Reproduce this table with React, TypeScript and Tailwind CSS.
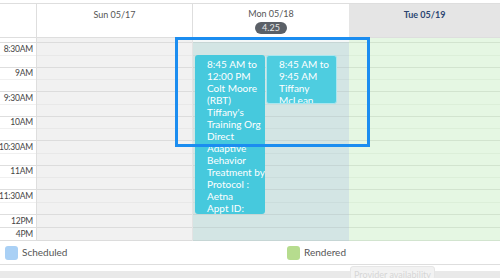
import React from "react"

interface Row {
    label: string;
    h: number;
    split: boolean;
}

const rows: Row[] = [
    { label: "", h: 5, split: false },
    { label: "8:30AM", h: 25, split: true },
    { label: "9AM", h: 24, split: true },
    { label: "9:30AM", h: 25, split: true },
    { label: "10AM", h: 24, split: true },
    { label: "10:30AM", h: 25, split: true },
    { label: "11AM", h: 24, split: true },
    { label: "11:30AM", h: 25, split: true },
    { label: "12PM", h: 13, split: false },
    { label: "4PM", h: 13, split: false },
]

const event1 = ["8:45 AM to", "12:00 PM", "Colt Moore", "(RBT)", "Tiffany's", "Training Org", "Direct", "Adaptive", "Behavior", "Treatment by", "Protocol :", "Aetna", "Appt ID:"]
const event2 = ["8:45 AM to", "9:45 AM", "Tiffany", "McLean"]

const DayCell = ({ row, bg, line, sub }: { row: Row; bg: string; line: string; sub: string }) => (
    <div className={`flex flex-col border-b ${bg} ${line}`} style={{ height: row.h }}>
        {row.split && <div className={`flex-1 border-b ${sub}`} />}
        {row.split && <div className="flex-1" />}
    </div>
)

export default function App() {
    return (
        <div className="w-[500px] h-[278px] overflow-hidden bg-white text-[9px] text-[#444]" style={{ fontFamily: 'Lato, "Liberation Sans", sans-serif' }}>
            <div className="h-[3px] bg-white" />
            {/* header */}
            <div className="grid grid-cols-[37px_156px_156px_151px] h-[35px] border-t border-b border-[#dedede]">
                <div className="border-r border-[#dedede] bg-white" />
                <div className="border-r border-[#dedede] bg-white flex justify-center pt-[4px] text-[#555]">Sun 05/17</div>
                <div className="bg-white flex flex-col items-center pt-[3px] text-[#555]">
                    <span>Mon 05/18</span>
                    <span className="mt-[1px] w-[32px] h-[12px] rounded-full bg-[#5b6067] text-[#e8e8e8] text-[9px] leading-[12px] text-center">4.25</span>
                </div>
                <div className="bg-[#e5e5e5] flex justify-center pt-[4px] font-bold text-[#2c4672]">Tue 05/19</div>
            </div>

            {/* body */}
            <div className="relative">
                <div className="grid grid-cols-[37px_156px_156px_151px]">
                    <div className="flex flex-col border-r border-[#dedede]">
                        {rows.map((r, i) => (
                            <div key={i} className="flex flex-col border-b border-[#dedede] bg-white" style={{ height: r.h }}>
                                <div className={`${r.split ? "flex-1 border-b border-[#f0f0f0]" : "flex-1"} flex items-center justify-end pr-[3px] leading-none text-[8.5px] tracking-[-0.2px] whitespace-nowrap`}>{r.label}</div>
                                {r.split && <div className="flex-1" />}
                            </div>
                        ))}
                    </div>
                    <div className="flex flex-col border-r border-[#e3e3e3]">
                        {rows.map((r, i) => (
                            <DayCell key={i} row={r} bg="bg-[#f1f1f1]" line="border-[#dcdcdc]" sub="border-[#e8e8e8]" />
                        ))}
                    </div>
                    <div className="flex flex-col">
                        {rows.map((r, i) => (
                            <DayCell key={i} row={r} bg={i === 0 ? "bg-[#f4f8f8]" : "bg-[#d3e5e4]"} line="border-[#c6d6d5]" sub="border-[#cbdddc]" />
                        ))}
                    </div>
                    <div className="flex flex-col">
                        {rows.map((r, i) => (
                            <DayCell key={i} row={r} bg="bg-[#e5f7e3]" line="border-[#d2e4cf]" sub="border-[#dcefd9]" />
                        ))}
                    </div>
                </div>

                {/* events */}
                <div className="absolute left-[195px] top-[17px] w-[70px] h-[159px] rounded-[3px] bg-[#46c9dd] overflow-hidden pl-[12px] pt-[3px] text-[10px] leading-[12px] text-white">
                    {event1.map((t, i) => (
                        <div key={i} className="whitespace-nowrap">{t}</div>
                    ))}
                </div>
                <div className="absolute left-[266px] top-[17px] w-[71px] h-[49px] rounded-[3px] bg-[#4ecde0] border border-[#a9e6ef] overflow-hidden pl-[12px] pt-[2px] text-[10px] leading-[12px] text-white">
                    {event2.map((t, i) => (
                        <div key={i} className="whitespace-nowrap">{t}</div>
                    ))}
                </div>

                {/* selection highlight */}
                <div className="absolute left-[175px] top-[-1px] w-[195px] h-[110px] border-[3px] border-[#1b8df0] pointer-events-none" />
            </div>

            {/* legend */}
            <div className="h-[23px] flex items-center bg-white text-[10px] text-[#555]">
                <div className="flex items-center w-[287px] pl-[5px]">
                    <span className="w-[13px] h-[14px] rounded-[3px] bg-[#a9d0f5] mr-[4px]" />
                    <span>Scheduled</span>
                </div>
                <div className="flex items-center">
                    <span className="w-[13px] h-[14px] rounded-[3px] bg-[#b6dc8e] mr-[4px]" />
                    <span>Rendered</span>
                </div>
            </div>
            <div className="h-[7px] bg-white border-t border-[#dedede]" />
            <div className="h-[8px] bg-[#e9e9e9] relative">
                <div className="absolute left-[350px] top-[-5px] w-[85px] h-[14px] rounded-[3px] bg-[#f2f2f2] border border-[#e6e6e6] text-[9px] text-[#d6d6d6] flex justify-center pt-[1px]">Provider availability</div>
            </div>
        </div>
    )
}
